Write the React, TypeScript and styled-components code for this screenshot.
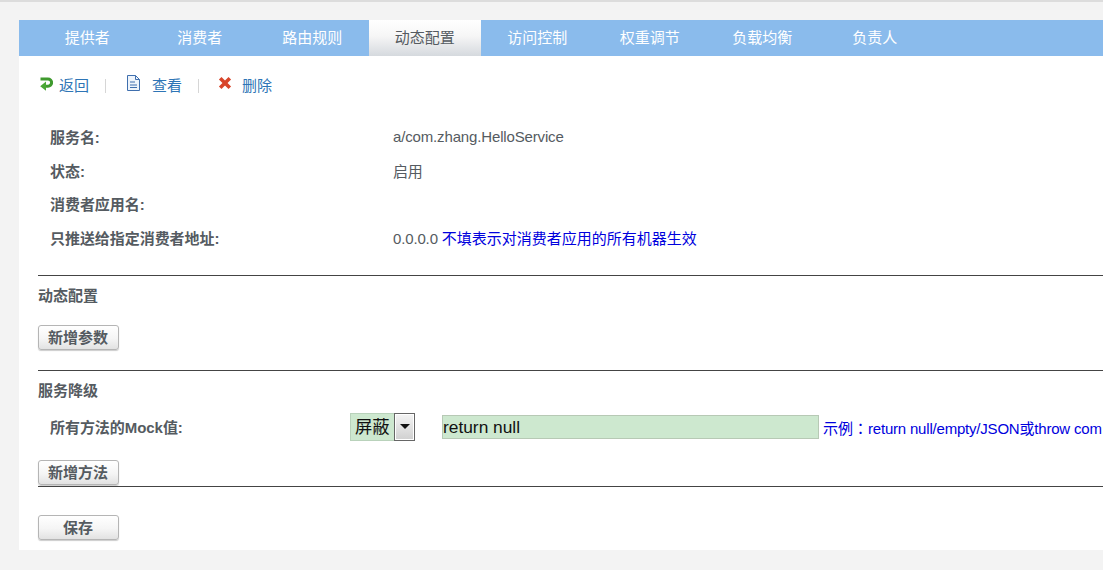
import styled, { createGlobalStyle } from "styled-components";

const GlobalStyle = createGlobalStyle`
  html, body {
    margin: 0;
    padding: 0;
    height: 570px;
    overflow: hidden;
    background: #f3f3f3;
  }
  body {
    font-family: "Liberation Sans", "Noto Sans CJK SC", sans-serif;
    font-size: 15px;
    color: #555b61;
    border-top: 2px solid #dcdcdc;
    box-sizing: border-box;
  }
`;

const Main = styled.div`
  margin: 18px 0 0 19px;
  height: 530px;
  background: #fff;
  overflow: hidden;
`;

const TabBar = styled.nav`
  display: flex;
  height: 36px;
  padding-left: 12px;
  background: #8abbec;
`;

const Tab = styled.a<{ $active?: boolean }>`
  flex: 0 0 112.5px;
  text-align: center;
  line-height: 36px;
  font-size: 15px;
  color: ${(p) => (p.$active ? "#555b61" : "#fff")};
  background: ${(p) =>
    p.$active ? "linear-gradient(#ffffff 0%, #f6f6f6 45%, #d5d9de 100%)" : "transparent"};
`;

const Toolbar = styled.div`
  display: flex;
  align-items: center;
  height: 20px;
  margin: 19px 0 0 20px;
`;

const ToolLink = styled.a`
  color: #2e75b6;
  font-size: 15px;
  line-height: 20px;
  position: relative;
  top: 1px;
`;

const ToolIcon = styled.svg<{ $gap: number; $lift: number }>`
  display: block;
  flex: none;
  margin-right: ${(p) => p.$gap}px;
  position: relative;
  top: ${(p) => -p.$lift}px;
`;

const Sep = styled.span<{ $left: number; $right: number }>`
  width: 1px;
  height: 14px;
  background: #d6d6d6;
  margin: 2px ${(p) => p.$right}px 0 ${(p) => p.$left}px;
`;

const InfoTable = styled.div`
  display: grid;
  grid-template-columns: 343px 1fr;
  grid-auto-rows: 33.5px;
  align-items: center;
  margin: 25px 0 0 31px;
`;

const Label = styled.div`
  font-weight: bold;
  font-size: 15px;
  letter-spacing: -0.05px;
  white-space: nowrap;
`;

const Value = styled.div`
  font-size: 15px;
  letter-spacing: -0.15px;
  white-space: nowrap;
`;

const BlueNote = styled.span`
  color: #0000dd;
  letter-spacing: 0;
`;

const Rule = styled.hr`
  border: 0;
  height: 1px;
  background: #444;
  margin: 0 0 0 19px;
`;

const SectionTitle = styled.h3`
  margin: 0 0 0 19px;
  font-size: 15px;
  font-weight: bold;
  line-height: 20px;
`;

const Btn = styled.button`
  display: block;
  width: 81px;
  height: 25px;
  margin: 0 0 0 19px;
  padding: 0 1px 2px 0;
  font-family: inherit;
  font-size: 15px;
  font-weight: bold;
  color: #555b61;
  border: 1px solid #b5b5b5;
  border-radius: 3px;
  background: linear-gradient(#ffffff 0%, #f5f5f5 55%, #e2e2e2 100%);
  box-shadow: 0 1px 1px #ccc;
`;

const MockRow = styled.div`
  display: flex;
  align-items: center;
  height: 28px;
  margin: 0 0 0 31px;
  white-space: nowrap;
`;

const MockLabel = styled(Label)`
  flex: 0 0 300px;
  padding-bottom: 2px;
`;

const SelectBox = styled.div`
  flex: none;
  display: flex;
  width: 65px;
  height: 28px;
  box-sizing: border-box;
  margin-right: 27px;
  background: #cde8cf;
  border: 1px solid #b9d2bb;
`;

const SelectText = styled.span`
  flex: 1;
  font-size: 17.33px;
  line-height: 26px;
  color: #111;
  padding-left: 4px;
`;

const SelectArrow = styled.span`
  flex: 0 0 21px;
  display: flex;
  align-items: flex-start;
  justify-content: center;
  padding-top: 10px;
  box-sizing: border-box;
  margin: -1px -1px -1px 0;
  border: 1px solid #666;
  box-shadow: inset 0 0 0 1px #fff;
  background: linear-gradient(#f4f4f4, #d0d0d0);

  &::after {
    content: "";
    border-left: 5px solid transparent;
    border-right: 5px solid transparent;
    border-top: 5px solid #111;
  }
`;

const MockInput = styled.input`
  flex: none;
  width: 377px;
  height: 24px;
  box-sizing: border-box;
  margin: 0 4px 0 0;
  padding: 0;
  border: 1px solid #b7c9b5;
  background: #cde8cf;
  font-family: "Liberation Sans", "Noto Sans CJK SC", sans-serif;
  font-size: 17.33px;
  color: #111;
  outline: none;
`;

const Hint = styled.span`
  font-size: 15px;
  letter-spacing: -0.2px;
  color: #0000dd;
`;

const HintHead = styled.span`
  font-family: "Noto Sans CJK TC", sans-serif;
  letter-spacing: 0;
`;

const Spacer = styled.div<{ $h: number }>`
  height: ${(p) => p.$h}px;
`;

const tabs = ["提供者", "消费者", "路由规则", "动态配置", "访问控制", "权重调节", "负载均衡", "负责人"];

export default function App() {
  return (
    <>
      <GlobalStyle />
      <Main>
        <TabBar>
          {tabs.map((t) => (
            <Tab key={t} $active={t === "动态配置"}>
              {t}
            </Tab>
          ))}
        </TabBar>

        <Toolbar>
          <ToolIcon $gap={6} $lift={1} width="14" height="16" viewBox="0 0 14 16">
            <path d="M1.5 3h7.5a3.6 3.6 0 0 1 0 7.2H6" fill="none" stroke="#3f9a2e" strokeWidth="3" />
            <path d="M7 5.6 1.2 10.2 7 14.8Z" fill="#4aa735" />
          </ToolIcon>
          <ToolLink>返回</ToolLink>
          <Sep $left={16} $right={20} />
          <ToolIcon $gap={11} $lift={2} width="15" height="17" viewBox="0 0 15 17">
            <path d="M1.5.5h8l4 4v11h-12Z" fill="#eef4fb" stroke="#3f6fae" />
            <path d="M9.5.5v4h4M4 7h5M4 10h7M4 12.5h7" fill="none" stroke="#3f6fae" />
          </ToolIcon>
          <ToolLink>查看</ToolLink>
          <Sep $left={16} $right={19} />
          <ToolIcon $gap={10} $lift={2} width="14" height="14" viewBox="0 0 14 14">
            <path d="M2.2 2.2 11.8 11.8M11.8 2.2 2.2 11.8" fill="none" stroke="#d8452a" strokeWidth="3.6" />
          </ToolIcon>
          <ToolLink>删除</ToolLink>
        </Toolbar>

        <InfoTable>
          <Label>服务名:</Label>
          <Value>a/com.zhang.HelloService</Value>
          <Label>状态:</Label>
          <Value>启用</Value>
          <Label>消费者应用名:</Label>
          <Value />
          <Label>只推送给指定消费者地址:</Label>
          <Value>
            0.0.0.0 <BlueNote>不填表示对消费者应用的所有机器生效</BlueNote>
          </Value>
        </InfoTable>

        <Spacer $h={21} />
        <Rule />
        <Spacer $h={10} />
        <SectionTitle>动态配置</SectionTitle>
        <Spacer $h={19} />
        <Btn>新增参数</Btn>
        <Spacer $h={20} />
        <Rule />
        <Spacer $h={10} />
        <SectionTitle>服务降级</SectionTitle>
        <Spacer $h={12} />
        <MockRow>
          <MockLabel>所有方法的Mock值:</MockLabel>
          <SelectBox>
            <SelectText>屏蔽</SelectText>
            <SelectArrow />
          </SelectBox>
          <MockInput readOnly value="return null" />
          <Hint>
            <HintHead>示例：</HintHead>return null/empty/JSON或throw com
          </Hint>
        </MockRow>
        <Spacer $h={19} />
        <Btn>新增方法</Btn>
        <Spacer $h={1} />
        <Rule />
        <Spacer $h={28} />
        <Btn>保存</Btn>
      </Main>
    </>
  );
}
